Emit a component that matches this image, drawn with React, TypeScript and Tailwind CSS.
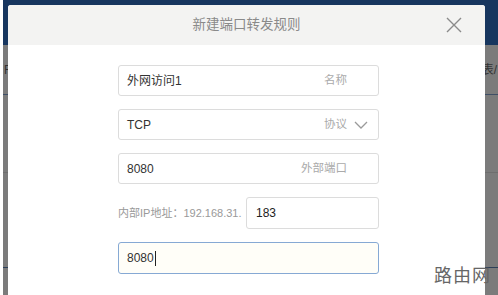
const font = { fontFamily: '"Liberation Sans", "Noto Sans CJK SC", sans-serif' }

function Chevron() {
  return (
    <svg viewBox="0 0 14 8" className="ml-[7px] h-[8px] w-[14px]" fill="none" stroke="#9a9a9a" strokeWidth="1.3">
      <path d="M1 1l6 6 6-6" />
    </svg>
  )
}

function Field({ value, label, chevron }: { value: string; label: string; chevron?: boolean }) {
  return (
    <div className="flex h-[31px] w-[261px] items-center rounded-[3px] border border-[#dcdcdc] bg-white pl-[8px] pr-[10px]">
      <span className="flex-1 text-[12px] text-[#333]">{value}</span>
      <span className="text-[11.5px] text-[#aaa]">{label}</span>
      {chevron ? <Chevron /> : <span className="w-[21px]" />}
    </div>
  )
}

export default function App() {
  return (
    <div className="relative h-[295px] w-[498px] overflow-hidden bg-white" style={font}>
      {/* dimmed page behind the dialog */}
      <div className="ml-[3px] flex h-full flex-col bg-[#7b7b7b]">
        <div className="h-[45px] bg-[#17365f]" />
        <div className="flex h-[50px] items-center justify-between border-b border-[#3f4f66] px-[1px] text-[12px] text-[#333]">
          <span>F</span>
          <span>表/</span>
        </div>
        <div className="h-[78px] border-b border-[#6e6e6e]" />
        <div className="h-[95px] border-b border-[#2d3f58]" />
      </div>

      {/* dialog */}
      <div className="absolute left-[8px] top-[5px] flex h-[300px] w-[477px] flex-col rounded-t-[3px] bg-white">
        <div className="relative flex h-[40px] items-center justify-center rounded-t-[3px] bg-[#f3f3f2]">
          <span className="text-[13.5px] text-[#8a8a8a]">新建端口转发规则</span>
          <svg viewBox="0 0 16 16" className="absolute right-[23px] top-[12px] h-[16px] w-[16px]" stroke="#8a8a8a" strokeWidth="1.4">
            <path d="M1 1l14 14M15 1L1 15" />
          </svg>
        </div>
        <div className="flex flex-col gap-[13px] pl-[110px] pt-[20px]">
          <Field value="外网访问1" label="名称" />
          <Field value="TCP" label="协议" chevron />
          <Field value="8080" label="外部端口" />
          <div className="flex items-center">
            <span className="w-[128px] whitespace-nowrap text-[11px] text-[#999]">内部IP地址：192.168.31.</span>
            <div className="flex h-[32px] w-[133px] items-center rounded-[3px] border border-[#dcdcdc] pl-[9px] text-[12px] text-[#222]">
              183
            </div>
          </div>
          <div className="flex h-[32px] w-[261px] items-center rounded-[3px] border border-[#86a9d4] bg-[#fffef8] pl-[8px] text-[12px] text-[#333]">
            8080
            <span className="ml-[1px] h-[15px] w-px bg-[#222]" />
          </div>
        </div>
      </div>

      {/* watermark */}
      <div className="absolute left-[434px] top-[267px] whitespace-nowrap text-[18px] leading-none tracking-[1px] text-[#666]">
        路由网
      </div>
    </div>
  )
}
